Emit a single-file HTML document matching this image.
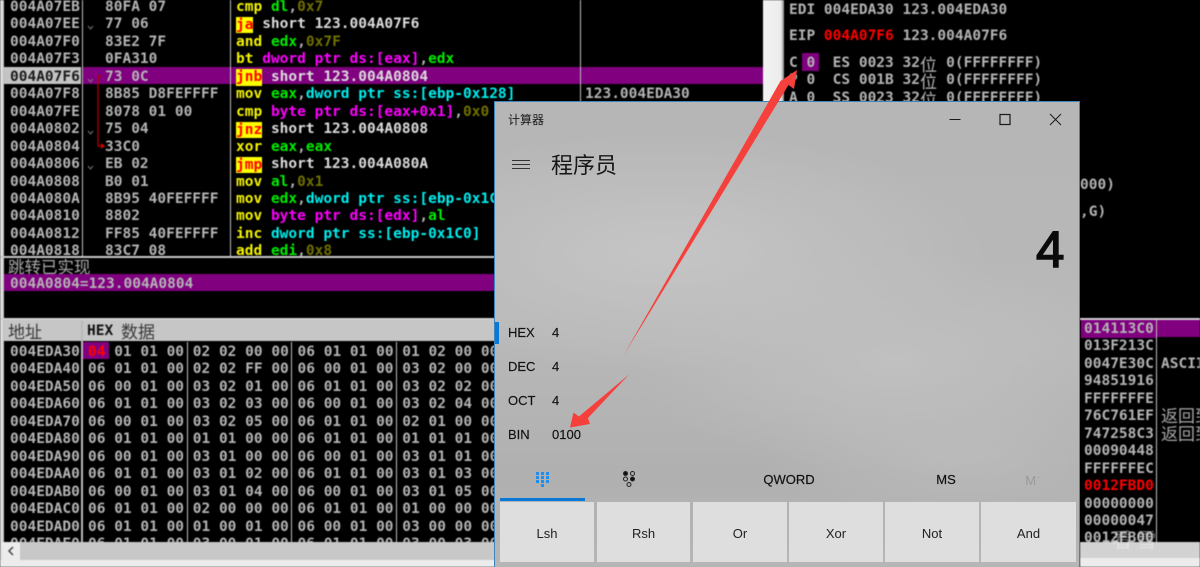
<!DOCTYPE html>
<html lang="zh">
<head>
<meta charset="utf-8">
<title>计算器</title>
<style>
html,body{margin:0;padding:0;width:1200px;height:567px;overflow:hidden;background:#000}
#root{position:relative;width:1200px;height:567px;overflow:hidden;background:#000}
.a{position:absolute}
pre{position:absolute;margin:0;font:bold 14.5px/17.45px "DejaVu Sans Mono","Liberation Mono",monospace;color:#b4b4b4;white-space:pre}
#dbg{position:absolute;left:0;top:0;width:1200px;height:567px;filter:blur(.5px)}
.y{color:#f4f400}.g{color:#0e0}.c{color:#0ee}.m{color:#f0f}.o{color:#707000}.w{color:#dcdcdc}
.j{color:#f00;background:#ff0;display:inline-block;line-height:16.5px;vertical-align:top;margin-top:.5px}
.cj{font-family:"Noto Sans CJK SC",sans-serif;font-weight:400}
.wd{display:inline-block;width:17.46px;font:400 17px/17px "Noto Sans CJK SC",sans-serif;vertical-align:top}
#calc{position:absolute;left:494px;top:101px;width:586px;height:470px;box-sizing:border-box;border:1px solid #3a86bd;overflow:hidden;
background:radial-gradient(ellipse 320px 120px at 170px 150px,#c5c5c5 0,rgba(197,197,197,0) 100%),radial-gradient(ellipse 260px 110px at 400px 260px,#c0c0c0 0,rgba(192,192,192,0) 100%),radial-gradient(ellipse 200px 70px at 470px 355px,#bababa 0,rgba(186,186,186,0) 100%),linear-gradient(180deg,#b6b6b6 0,#b8b8b8 50%,#b0b0b0 80%,#b6b6b6 100%);
font-family:"Liberation Sans","Noto Sans CJK SC",sans-serif;color:#111}
#calc .t{position:absolute;white-space:nowrap}
.lab{font-size:13px;line-height:16px;color:#111;-webkit-text-stroke:.15px #111}
.btn{position:absolute;top:400px;height:60px;background:#dedede;text-align:center;font-size:13px;line-height:64px;color:#222}
.tab{font-size:13px;line-height:16px;font-weight:400;-webkit-text-stroke:.2px #111;transform:translateX(-50%)}
</style>
</head>
<body>
<div id="root">
<div id="dbg">
  <!-- disassembly pane -->
  <div class="a" style="left:3px;top:0;width:1px;height:542px;background:#bdbdbd"></div>
  <div class="a" style="left:0;top:0;width:3px;height:567px;background:#dcdcdc"></div>
  <div class="a" style="left:4px;top:67px;width:77px;height:17px;background:#c4c4c4"></div>
  <div class="a" style="left:83px;top:67px;width:680px;height:17px;background:#800080"></div>
  <div class="a" style="left:82px;top:0;width:1px;height:256px;background:#bdbdbd"></div>
  <div class="a" style="left:230px;top:0;width:1px;height:256px;background:#bdbdbd"></div>
  <div class="a" style="left:580px;top:0;width:1px;height:256px;background:#bdbdbd"></div>
  <div class="a" style="left:763px;top:0;width:21px;height:102px;background:linear-gradient(90deg,#f2f2f2,#ececec 85%,#8a8a8a)"></div>
  <div class="a" style="left:0;top:0;width:763px;height:256px;overflow:hidden">
<pre style="left:10px;top:-1px">004A07EB
004A07EE
004A07F0
004A07F3
<span style="color:#1c1c1c">004A07F6</span>
004A07F8
004A07FE
004A0802
004A0804
004A0806
004A0808
004A080A
004A0810
004A0812
004A0818</pre>
<pre style="left:105px;top:-1px">80FA 07
77 06
83E2 7F
0FA310
73 0C
8B85 D8FEFFFF
8078 01 00
75 04
33C0
EB 02
B0 01
8B95 40FEFFFF
8802
FF85 40FEFFFF
83C7 08</pre>
<pre style="left:236px;top:-1px"><span class="y">cmp</span> <span class="g">dl</span>,<span class="o">0x7</span>
<span class="j">ja</span> <span class="w">short 123.004A07F6</span>
<span class="y">and</span> <span class="g">edx</span>,<span class="o">0x7F</span>
<span class="y">bt</span> <span class="m">dword ptr ds:[eax]</span>,<span class="g">edx</span>
<span class="j">jnb</span> <span class="w">short 123.004A0804</span>
<span class="y">mov</span> <span class="g">eax</span>,<span class="c">dword ptr ss:[ebp-0x128]</span>
<span class="y">cmp</span> <span class="m">byte ptr ds:[eax+0x1]</span>,<span class="o">0x0</span>
<span class="j">jnz</span> <span class="w">short 123.004A0808</span>
<span class="y">xor</span> <span class="g">eax</span>,<span class="g">eax</span>
<span class="j">jmp</span> <span class="w">short 123.004A080A</span>
<span class="y">mov</span> <span class="g">al</span>,<span class="o">0x1</span>
<span class="y">mov</span> <span class="g">edx</span>,<span class="c">dword ptr ss:[ebp-0x1C0]</span>
<span class="y">mov</span> <span class="m">byte ptr ds:[edx]</span>,<span class="g">al</span>
<span class="y">inc</span> <span class="c">dword ptr ss:[ebp-0x1C0]</span>
<span class="y">add</span> <span class="g">edi</span>,<span class="o">0x8</span></pre>
<pre style="left:585px;top:86px">123.004EDA30</pre>
  </div>
  <svg class="a" style="left:0;top:0" width="230" height="256" fill="none">
    <path d="M88 79l2.500 3 2.500-3M88 131l2.500 3 2.500-3M88 166l2.500 3 2.500-3M88 26l2.500 3 2.500-3" stroke="#777" stroke-width="1"/>
    <path d="M101 76h-3v70h5" stroke="#b00000" stroke-width="1.300"/>
    <path d="M101 143l4 3-4 3z" fill="#d00000"/>
  </svg>

  <!-- info pane -->
  <div class="a" style="left:0;top:256px;width:495px;height:2px;background:#c8c8c8"></div>
  <div class="a cj" style="left:8px;top:255px;font-size:16.500px;line-height:22px;color:#a8a8a8">跳转已实现</div>
  <div class="a" style="left:4px;top:274px;width:491px;height:17px;background:#800080"></div>
  <pre style="left:10px;top:276px">004A0804=123.004A0804</pre>

  <!-- dump pane -->
  <div class="a" style="left:0;top:318px;width:495px;height:2px;background:#d0d0d0"></div>
  <div class="a" style="left:4px;top:320px;width:77px;height:21px;background:#c6c6c6"></div>
  <div class="a" style="left:83px;top:320px;width:412px;height:21px;background:#c6c6c6"></div>
  <div class="a cj" style="left:8px;top:318px;font-size:17px;line-height:25px;color:#3a3a3a">地址</div>
  <pre style="left:87px;top:323px;color:#111">HEX</pre>
  <div class="a cj" style="left:121px;top:318px;font-size:17px;line-height:25px;color:#3a3a3a">数据</div>
  <div class="a" style="left:81px;top:320px;width:2px;height:222px;background:#b8b8b8"></div>
  <div class="a" style="left:187px;top:342px;width:1px;height:200px;background:#bdbdbd"></div>
  <div class="a" style="left:291px;top:342px;width:1px;height:200px;background:#bdbdbd"></div>
  <div class="a" style="left:396px;top:342px;width:1px;height:200px;background:#bdbdbd"></div>
  <div class="a" style="left:83px;top:342px;width:26px;height:17px;background:#800080"></div>
  <div class="a" style="left:0;top:342px;width:495px;height:200px;overflow:hidden">
<pre style="left:10px;top:2px">004EDA30
004EDA40
004EDA50
004EDA60
004EDA70
004EDA80
004EDA90
004EDAA0
004EDAB0
004EDAC0
004EDAD0
004EDAE0</pre>
<pre style="left:88px;top:2px"><span style="color:#f00">04</span> 01 01 00 02 02 00 00 06 01 01 00 01 02 00 00
06 01 01 00 02 02 FF 00 06 00 01 00 03 02 00 00
06 00 01 00 03 02 01 00 06 01 01 00 03 02 02 00
06 01 01 00 03 02 03 00 06 00 01 00 03 02 04 00
06 00 01 00 03 02 05 00 06 01 01 00 02 01 00 00
06 01 01 00 01 01 00 00 06 01 01 00 01 01 01 00
06 00 01 00 03 01 00 00 06 00 01 00 03 01 01 00
06 01 01 00 03 01 02 00 06 01 01 00 03 01 03 00
06 00 01 00 03 01 04 00 06 00 01 00 03 01 05 00
06 01 01 00 02 00 00 00 06 01 01 00 01 00 00 00
06 01 01 00 01 00 01 00 06 00 01 00 03 00 00 00
06 01 01 00 03 00 01 00 06 01 01 00 03 00 03 00</pre>
  </div>
  <div class="a" style="left:2px;top:542px;width:493px;height:18px;background:#c8c8c8"></div>
  <div class="a" style="left:2px;top:542px;width:18px;height:18px;background:#ececec"></div>
  <svg class="a" style="left:2px;top:542px" width="18" height="18" fill="none"><path d="M11 5l-4 4 4 4" stroke="#444" stroke-width="1.500"/></svg>
  <div class="a" style="left:0;top:560px;width:495px;height:7px;background:#ececec"></div>

  <!-- registers -->
  <pre style="left:789px;top:2px">EDI 004EDA30 123.004EDA30</pre>
  <pre style="left:789px;top:28px">EIP <span style="color:#f00">004A07F6</span> 123.004A07F6</pre>
  <div class="a" style="left:802px;top:53px;width:17px;height:18px;background:#800080"></div>
  <pre style="left:789px;top:55px">C 0  ES 0023 32<span class="wd">位</span> 0(FFFFFFFF)
P 0  CS 001B 32<span class="wd">位</span> 0(FFFFFFFF)
A 0  SS 0023 32<span class="wd">位</span> 0(FFFFFFFF)</pre>
  <pre style="left:1080px;top:177px">000)</pre>
  <pre style="left:1080px;top:204px">,G)</pre>

  <!-- stack -->
  <div class="a" style="left:1080px;top:318px;width:120px;height:2px;background:#d0d0d0"></div>
  <div class="a" style="left:1081px;top:320px;width:75px;height:18px;background:#800080"></div>
  <div class="a" style="left:1157px;top:320px;width:43px;height:17px;background:#800080"></div>
  <div class="a" style="left:1156px;top:320px;width:1px;height:222px;background:#bdbdbd"></div>
  <div class="a" style="left:1080px;top:320px;width:120px;height:222px;overflow:hidden">
<pre style="left:4px;top:1px">014113C0
013F213C
0047E30C
94851916
FFFFFFFE
76C761EF
747258C3
00090448
FFFFFFEC
<span style="color:#f00">0012FBD0</span>
00000000
00000047
0012FB00</pre>
<pre style="left:81px;top:36px">ASCII</pre>
<div class="a cj" style="left:81px;top:86px;font-size:17px;line-height:17.500px;color:#a8a8a8;white-space:nowrap">返回到<br>返回到</div>
  </div>
  <div class="a" style="left:1080px;top:542px;width:120px;height:25px;background:#d2d2d2"></div>
  <div class="a" style="left:1080px;top:558px;width:120px;height:9px;background:#ececec"></div>
  <div class="a cj" style="left:1112px;top:527px;font-size:20px;line-height:24px;color:rgba(255,255,255,.4);white-space:nowrap">看 雪</div>
</div>

<!-- calculator -->
<div id="calc">
  <div class="t" style="left:13px;top:10px;font-size:12px;line-height:16px;font-family:'Noto Sans CJK SC',sans-serif;color:#1a1a1a">计算器</div>
  <svg class="a" style="left:445px;top:5px" width="130" height="24" fill="none" stroke="#1a1a1a" stroke-width="1">
    <path d="M9.500 12.500h11"/><rect x="60" y="7.500" width="10" height="10" stroke-width="1.200"/><path d="M110 7l11 11M121 7l-11 11"/>
  </svg>
  <svg class="a" style="left:17px;top:57px" width="18" height="12" fill="none" stroke="#333" stroke-width="1"><path d="M0 1.500h18M0 5.500h18M0 9.500h18"/></svg>
  <div class="t" style="left:56px;top:47px;font-size:22px;line-height:30px;font-family:'Noto Sans CJK SC',sans-serif;color:#161616">程序员</div>
  <div class="t" style="left:541px;top:119px;font-size:51px;line-height:58px;color:#0a0a0a;-webkit-text-stroke:1.500px #0a0a0a">4</div>

  <div class="a" style="left:0;top:220px;width:4px;height:22px;background:#0a78d7"></div>
  <div class="t lab" style="left:13px;top:223px">HEX</div><div class="t lab" style="left:57px;top:223px">4</div>
  <div class="t lab" style="left:13px;top:257px">DEC</div><div class="t lab" style="left:57px;top:257px">4</div>
  <div class="t lab" style="left:13px;top:291px">OCT</div><div class="t lab" style="left:57px;top:291px">4</div>
  <div class="t lab" style="left:13px;top:325px">BIN</div><div class="t lab" style="left:57px;top:325px">0100</div>

  <svg class="a" style="left:40px;top:368px" width="16" height="20" fill="#1e8ef0">
    <path d="M1 2h3v3H1zM6 2h3v3H6zM11 2h3v3h-3zM1 6h3v3H1zM6 6h3v3H6zM11 6h3v3h-3zM1 10h3v3H1zM6 10h3v3H6zM11 10h3v3h-3zM6 14h3v3H6z"/>
  </svg>
  <svg class="a" style="left:126px;top:368px" width="18" height="20" stroke="#222" stroke-width="1">
    <circle cx="4.500" cy="3.500" r="2" fill="#111"/><circle cx="11.500" cy="3.500" r="2" fill="none"/>
    <circle cx="4.500" cy="9" r="2" fill="none"/><circle cx="11.500" cy="9" r="2" fill="#111"/>
    <circle cx="8" cy="14.500" r="2" fill="none"/>
  </svg>
  <div class="a" style="left:5px;top:396px;width:85px;height:3px;background:#0a78d7"></div>
  <div class="t tab" style="left:294px;top:370px">QWORD</div>
  <div class="t tab" style="left:451px;top:370px">MS</div>
  <div class="t tab" style="left:538px;top:369px;color:#9a9a9a;-webkit-text-stroke:0">M<span style="font-size:9px;vertical-align:3px">⁻</span></div>

  <div class="btn" style="left:5px;width:94px">Lsh</div>
  <div class="btn" style="left:102px;width:93px">Rsh</div>
  <div class="btn" style="left:198px;width:94px">Or</div>
  <div class="btn" style="left:294px;width:94px">Xor</div>
  <div class="btn" style="left:390px;width:94px">Not</div>
  <div class="btn" style="left:486px;width:95px">And</div>
</div>

<!-- annotation arrows -->
<svg class="a" style="left:0;top:0" width="1200" height="567">
  <polygon fill="#f5403c" points="797,70 794,89 788.500,85 623.500,355.500 780.500,81"/>
  <polygon fill="#f5403c" points="570,427.500 573.500,412.500 579,416.500 629,374.500 588,418 590,424"/>
</svg>
</div>
</body>
</html>
